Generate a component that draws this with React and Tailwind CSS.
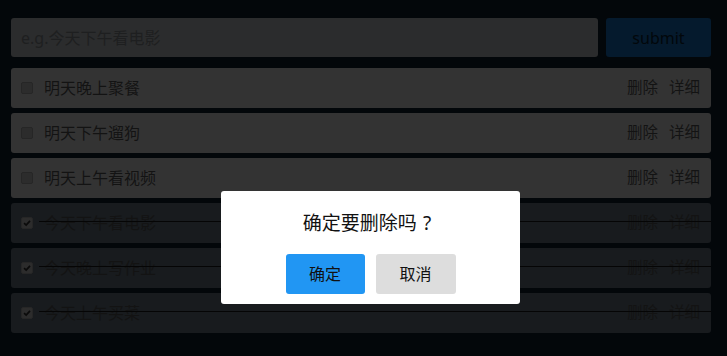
import React from "react";

const todos = [
  { id: 1, title: "明天晚上聚餐", done: false },
  { id: 2, title: "明天下午遛狗", done: false },
  { id: 3, title: "明天上午看视频", done: false },
  { id: 4, title: "今天下午看电影", done: true },
  { id: 5, title: "今天晚上写作业", done: true },
  { id: 6, title: "今天上午买菜", done: true },
];

const font = "font-['Noto_Sans','Noto_Sans_CJK_SC',sans-serif]";

function Check({ done }) {
  return (
    <span className="flex h-3 w-3 items-center justify-center rounded-[2px] border border-[#262626] bg-[#2c2c2c]">
      {done && (
        <svg viewBox="0 0 12 12" className="h-[10px] w-[10px]">
          <path d="M2.5 6.2 L5 8.6 L9.6 3.4" fill="none" stroke="#0a0a0a" strokeWidth="2" />
        </svg>
      )}
    </span>
  );
}

export default function App() {
  return (
    <div className={`relative min-h-[356px] bg-[#03070a] pl-[11px] pr-4 pt-[18px] ${font}`}>
      {/* Header form */}
      <div className="flex gap-2">
        <div className="flex h-[39px] flex-1 items-center rounded-[3px] bg-[#2b2c2d] px-[10px] text-[16px] text-[#1e1f20]">
          e.g.今天下午看电影
        </div>
        <button className="h-[39px] w-[105px] rounded-[3px] bg-[#051a2d] text-[16px] font-normal text-[#02070b]">
          submit
        </button>
      </div>

      {/* List */}
      <div className="mt-[11px] flex flex-col gap-[5px]">
        {todos.map((t) => (
          <div
            key={t.id}
            className={`relative flex h-10 items-center rounded-[3px] pl-[10px] pr-[11px] text-[16px] text-[#131313] ${
              t.done ? "bg-[#181b1e]" : "bg-[#333333]"
            }`}
          >
            <Check done={t.done} />
            <span className="ml-[11px] flex-1">{t.title}</span>
            <span className="text-[15.5px]">删除</span>
            <span className="ml-[11px] text-[15.5px]">详细</span>
            {t.done && <div className="absolute left-[28px] right-0 top-[18px] h-px bg-[#050505]" />}
          </div>
        ))}
      </div>

      {/* Confirm dialog */}
      <div className="absolute left-[221px] top-[191px] flex h-[113px] w-[299px] flex-col items-center rounded-[3px] bg-white">
        <p className="mt-[20px] flex text-[19px] leading-6 text-[#111]">
          确定要删除吗<span className="ml-[6px] mr-[7px]">?</span>
        </p>
        <div className="mt-[19px] flex gap-[11px] text-[16px] text-[#111]">
          <button className="h-10 w-[79px] rounded-[3px] bg-[#2196f3]">确定</button>
          <button className="h-10 w-[80px] rounded-[3px] bg-[#dddddd]">取消</button>
        </div>
      </div>
    </div>
  );
}
